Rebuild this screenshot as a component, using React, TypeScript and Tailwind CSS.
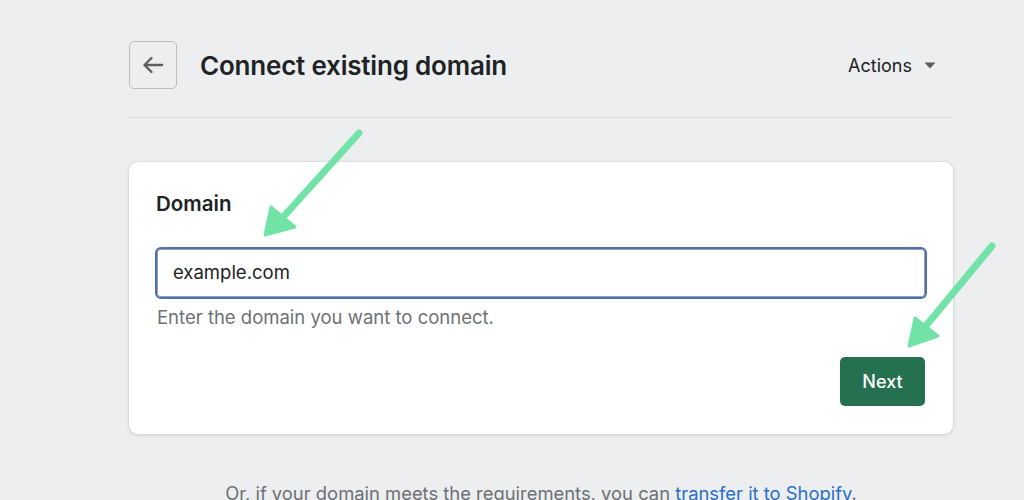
const font = { fontFamily: "Inter, 'Noto Sans', sans-serif" };

function Arrow({ x1, y1, x2, y2, tip, w1, w2 }: { x1: number; y1: number; x2: number; y2: number; tip: [number, number]; w1: [number, number]; w2: [number, number] }) {
  return (
    <g>
      <line x1={x1} y1={y1} x2={x2} y2={y2} stroke="#72e3a6" strokeWidth={7} strokeLinecap="round" />
      <polygon
        points={`${tip[0]},${tip[1]} ${w1[0]},${w1[1]} ${w2[0]},${w2[1]}`}
        fill="#72e3a6"
        stroke="#72e3a6"
        strokeWidth={3}
        strokeLinejoin="round"
      />
    </g>
  );
}

export default function App() {
  return (
    <div className="relative w-[1024px] h-[500px] overflow-hidden bg-[#eceef0]" style={font}>
      <div className="ml-[129px] w-[824px] pt-[41px]">
        {/* header */}
        <div className="flex items-center h-[48px]">
          <button className="w-[48px] h-[48px] rounded-[5px] border border-[#b9bec4] flex items-center justify-center">
            <svg width="22" height="18" viewBox="0 0 22 18" fill="none" stroke="#5c5f62" strokeWidth="2.4" strokeLinecap="round" strokeLinejoin="round">
              <path d="M20 9H2.5M9.5 2L2.5 9l7 7" />
            </svg>
          </button>
          <h1 className="ml-[23px] text-[26px] font-semibold text-[#202223] tracking-[-0.2px]">Connect existing domain</h1>
          <div className="ml-auto mr-[17px] flex items-center gap-[12px] text-[18px] text-[#202223]">
            <span className="ml-[-2px]">Actions</span>
            <svg width="12" height="7" viewBox="0 0 12 7">
              <path d="M0.5 0.5h11L6 6.5z" fill="#5c5f62" />
            </svg>
          </div>
        </div>
        <div className="mt-[28px] border-t border-[#d9dcdf]" />

        {/* card */}
        <div className="mt-[44px] bg-white rounded-[9px] shadow-[0_0_0_1px_rgba(63,63,68,0.04),0_1px_4px_rgba(63,63,68,0.15)] px-[26px] pt-[28px] pb-[28px]">
          <h2 className="text-[20.5px] leading-[28px] font-semibold text-[#202223] pl-[1px]">Domain</h2>
          <div className="mt-[29px] h-[52px] rounded-[6px] border-2 border-[#4a70b8] shadow-[inset_0_0_0_1px_#9aa0a6] flex items-center pl-[16px] text-[18.5px] text-[#202223]">
            example.com
          </div>
          <p className="mt-[6px] pl-[2px] text-[18.5px] leading-[24px] text-[#6d7175]">Enter the domain you want to connect.</p>
          <div className="mt-[28px] flex justify-end pr-[2px]">
            <button className="w-[85px] h-[49px] rounded-[5px] bg-[#24704f] text-white text-[18px] font-medium">Next</button>
          </div>
        </div>

        <p className="mt-[47px] text-center text-[18.4px] leading-[24px] text-[#6d7175]">
          Or, if your domain meets the requirements, you can <span className="text-[#2c6ecb]">transfer it to Shopify</span>.
        </p>
      </div>

      {/* annotation arrows */}
      <svg className="absolute inset-0 pointer-events-none" width="1024" height="500">
        <Arrow x1={359} y1={133} x2={285} y2={215} tip={[265, 235]} w1={[271, 207]} w2={[295, 227]} />
        <Arrow x1={992} y1={246} x2={925} y2={327} tip={[909, 346]} w1={[915, 318]} w2={[938, 336]} />
      </svg>
    </div>
  );
}
